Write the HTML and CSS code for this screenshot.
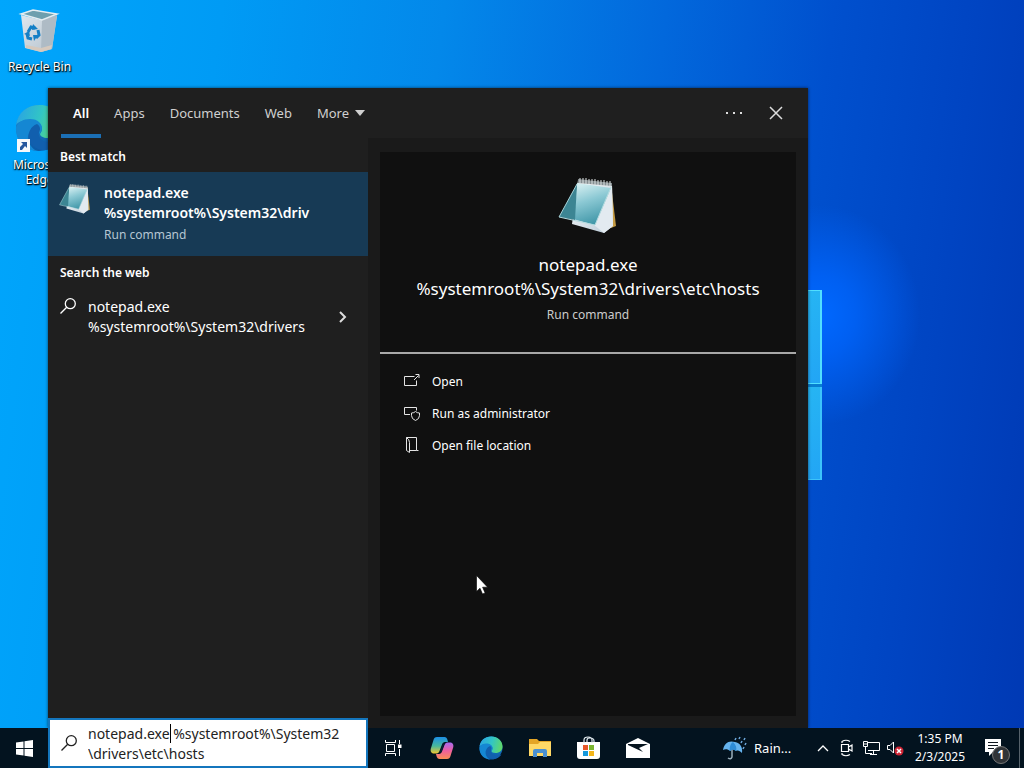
FILE: index.html
```html
<!DOCTYPE html>
<html lang="en">
<head>
<meta charset="utf-8">
<title>Desktop</title>
<link rel="stylesheet" href="styles.css">
</head>
<body>
<svg class="defs" width="0" height="0" aria-hidden="true">
  <defs>
    <linearGradient id="np-sheet" x1=".3" y1="0" x2=".6" y2="1"><stop offset="0" stop-color="#d2edf0"/><stop offset=".4" stop-color="#8cc9d4"/><stop offset="1" stop-color="#3b93a5"/></linearGradient>
    <linearGradient id="np-page" x1="0" y1="0" x2="1" y2="1"><stop offset="0" stop-color="#fff"/><stop offset="1" stop-color="#b8c9d6"/></linearGradient>
    <linearGradient id="edge-top" x1="0" y1=".4" x2="1" y2=".6"><stop offset="0" stop-color="#2aa5e2"/><stop offset=".5" stop-color="#32c5c5"/><stop offset="1" stop-color="#62d966"/></linearGradient>
    <linearGradient id="edge-mid" x1="0" y1="0" x2="0" y2="1"><stop offset="0" stop-color="#1b8edd"/><stop offset="1" stop-color="#0c59a4"/></linearGradient>
    <linearGradient id="cp-left" x1="0" y1="0" x2="0" y2="1"><stop offset="0" stop-color="#1c8fe6"/><stop offset=".55" stop-color="#48b99b"/><stop offset="1" stop-color="#f1c730"/></linearGradient>
    <linearGradient id="cp-right" x1="0" y1="0" x2="0" y2="1"><stop offset="0" stop-color="#a66af0"/><stop offset=".5" stop-color="#ef5f9e"/><stop offset="1" stop-color="#fb8d54"/></linearGradient>
    <linearGradient id="bin" x1="0" y1="0" x2="1" y2="1"><stop offset="0" stop-color="#dfe7ee"/><stop offset="1" stop-color="#b6c2cc"/></linearGradient>
    <symbol id="notepad" viewBox="0 0 60 60">
      <path d="M53 8l5 42-5 2-6-42z" fill="#c49a43"/>
      <path d="M20 4l34 4 1 42-9 7-32-9z" fill="url(#np-page)"/>
      <path d="M54 10l1 40-9 7-10-8z" fill="#e3eaf0"/>
      <path d="M19 7l34 5-16 37-22-6z" fill="url(#np-sheet)"/>
      <path d="M19 8l-2 36-16-3z" fill="#3c8593"/>
      <path d="M1 41l36 8 16-38" fill="none" stroke="#b5dce0"/>
      <path d="M19 8L1 41" stroke="#a7d3d8"/>
      <path d="M20 3l34 4v3L20 7z" fill="#848d90"/>
      <path d="M22 2v5m3-5v6m3-6v6m3-5v5m3-5v6m3-6v6m3-5v5m3-5v6m3-6v6m3-5v5m3-5v6" stroke="#dce1e1"/>
    </symbol>
    <symbol id="edge" viewBox="0 0 48 48">
      <circle cx="24" cy="24" r="23" fill="url(#edge-mid)"/>
      <path d="M1 21C3 8 12 1 25 1c13 0 22 9 22 20 0 8-6 13-14 13-5 0-8-2-8-4 0-1 2-2 2-5 0-5-5-9-12-9C8 16 3 18 1 21z" fill="url(#edge-top)"/>
      <path d="M1 23c2-5 7-8 14-8 8 0 12 5 12 9 0 3-2 4-2 6-5-7-13-4-12 5 1 6 5 10 9 12C9 46 0 36 1 23z" fill="#1587d3"/>
      <path d="M22 20c-13 5-10 24 5 26 7 1 14-3 18-9-9 4-19 1-21-5-1-3 1-5 1-7 0-2-1-4-3-5z" fill="#115fae"/>
    </symbol>
    <symbol id="search" viewBox="0 0 18 18"><g fill="none" stroke="currentColor" stroke-width="1.3"><circle cx="11.3" cy="6.7" r="5"/><path d="M7.700 10.300L1.500 16.500"/></g></symbol>
  </defs>
</svg>

<main class="desktop">
  <div class="window-logo" aria-hidden="true"><i></i><i></i></div>
  <nav class="shortcuts" aria-label="Desktop">
    <button class="shortcut">
      <svg width="48" height="52" viewBox="0 0 48 52">
        <path d="M5 11l4 33 16 4 11-3 5-33-16 4z" fill="url(#bin)"/>
        <path d="M26 16l-1 32 11-3 5-34z" fill="#aebbc5"/>
        <path d="M5 10l12-4 24 4-15 6z" fill="#6d9fae" stroke="#e5edf1" stroke-width="1.500"/>
        <path d="M10 41l15 3 11-3-1 4-10 3-15-4z" fill="#d6c9bd"/>
        <g fill="none" stroke="#147fc6" stroke-width="3"><path d="M12 28l3-5 4 1M22 26l1 5-3 3M16 35l-4-1-1-4"/></g>
        <path d="M17 20l5 5-6 1zm5 11l-4 6-1-6zM8 30l5-3 1 5z" fill="#147fc6"/>
      </svg>
      <span>Recycle Bin</span>
    </button>
    <button class="shortcut">
      <span class="linked"><svg width="48" height="48"><use href="#edge"/></svg>
      <svg class="arrow" width="13" height="13" viewBox="0 0 13 13"><path d="M0 0h13v13H0z" fill="#f6f8fb"/><path d="M3 11V8l3-3-2-2h6v6L8 7l-3 4z" fill="#24569d"/></svg></span>
      <span>Microsoft Edge</span>
    </button>
  </nav>

  <section class="panel" aria-label="Search">
    <header class="panel-head">
      <nav class="tabs">
        <button class="tab tab-on">All</button>
        <button class="tab">Apps</button>
        <button class="tab">Documents</button>
        <button class="tab">Web</button>
        <button class="tab">More <svg width="10" height="6" viewBox="0 0 10 6"><path d="M0 0h10L5 6z" fill="currentColor"/></svg></button>
      </nav>
      <button class="head-btn" aria-label="Options"><svg width="16" height="4" viewBox="0 0 16 4" fill="#ddd"><path d="M0 1h2v2H0zM7 1h2v2H7zM14 1h2v2h-2z"/></svg></button>
      <button class="head-btn" aria-label="Close"><svg width="14" height="14" viewBox="0 0 14 14"><path d="M1 1l12 12M13 1L1 13" stroke="#ddd" stroke-width="1.500"/></svg></button>
    </header>
    <div class="panel-body">
      <div class="results">
        <h2>Best match</h2>
        <button class="best">
          <svg width="32" height="32"><use href="#notepad"/></svg>
          <span class="best-text"><strong>notepad.exe<br>%systemroot%\System32\driv</strong><small>Run command</small></span>
        </button>
        <h2>Search the web</h2>
        <button class="web">
          <svg width="18" height="18"><use href="#search"/></svg>
          <span>notepad.exe<br>%systemroot%\System32\drivers</span>
          <svg class="go" width="8" height="14" viewBox="0 0 8 14"><path d="M1 2l5 5-5 5" fill="none" stroke="#ddd" stroke-width="2"/></svg>
        </button>
      </div>
      <article class="preview">
        <div class="hero">
          <svg width="64" height="60"><use href="#notepad"/></svg>
          <h1>notepad.exe<br>%systemroot%\System32\drivers\etc\hosts</h1>
          <p>Run command</p>
        </div>
        <div class="actions">
          <button class="action"><svg width="16" height="18" viewBox="0 0 16 18"><path d="M10.500 3.500h-10v9h12v-5M10 7l4.500-4.500M11.500 1.500h3.500V5" fill="none" stroke="#e4e4e4"/></svg>Open</button>
          <button class="action"><svg width="16" height="18" viewBox="0 0 16 18"><path d="M6 9.500H.500v-7h12v3M7.500 8q2.500 0 4-1.500 1.500 1.500 4 1.500v2.500q0 3.500-4 5-4-1.500-4-5z" fill="none" stroke="#e4e4e4"/></svg>Run as administrator</button>
          <button class="action"><svg width="16" height="18" viewBox="0 0 16 18"><path d="M2.500 .500h10v13h2M12.500 13.500H6M2.500.500v13l3 2V5.500q0-3-3-5" fill="none" stroke="#e4e4e4"/></svg>Open file location</button>
        </div>
      </article>
    </div>
  </section>
</main>

<footer class="taskbar">
  <button class="start" aria-label="Start"><svg width="17" height="17" viewBox="0 0 17 17" fill="#fff"><path d="M0 2.500L7.500 1.500V8H0zM8.500 1.300L17 0v8H8.500zM0 9h7.500v6.500L0 14.500zM8.500 9H17v8l-8.500-1.300z"/></svg></button>
  <label class="searchbox">
    <svg width="18" height="18"><use href="#search"/></svg>
    <textarea rows="2" aria-label="Type here to search" spellcheck="false">notepad.exe %systemroot%\System32
\drivers\etc\hosts</textarea>
    <i class="caret"></i>
  </label>
  <nav class="apps" aria-label="Taskbar">
    <button aria-label="Task view"><svg width="18" height="18" viewBox="0 0 18 18"><path d="M1.500 1v2.500h10V1M1.500 17v-2.500h10V17M2.500 5.500h8v7h-8zM15.500 1v4M15.500 10v7" fill="none" stroke="#fff"/><path d="M14 5.500h3.500V9H14z" fill="#fff"/></svg></button>
    <button aria-label="Copilot"><svg width="24" height="24" viewBox="0 0 24 24"><path d="M7 1h7.500c1.500 0 2.500 1 3 3l.5 2h-3c-1.500 0-2.500 1-3 2.500L9.500 15c-.5 1.500-1.500 2.500-3 2.500H4c-3 0-4-2.500-3-5.500L3.500 4C4 2 5 1 7 1z" fill="url(#cp-left)"/><path d="M17 23H9.500C8 23 7 22 6.500 20L6 18h3c1.500 0 2.500-1 3-2.500L14.500 9c.5-1.500 1.500-2.500 3-2.500H20c3 0 4 2.500 3 5.500L20.500 20c-.5 2-1.500 3-3.500 3z" fill="url(#cp-right)"/><path d="M13 7.500h1.500L11.500 16H9.800z" fill="#062236"/></svg></button>
    <button aria-label="Edge"><svg width="24" height="24"><use href="#edge"/></svg></button>
    <button aria-label="File Explorer"><svg width="22" height="20" viewBox="0 0 22 20"><path d="M0 1h8l2 2h12v5H0z" fill="#e4a526"/><path d="M0 6h9l2-2h11v14H0z" fill="#ffd866"/><path d="M4 19v-6q0-2 2-2h10q2 0 2 2v6h-4v-4H8v4z" fill="#4a8fd0"/></svg></button>
    <button aria-label="Store"><svg width="24" height="24" viewBox="0 0 24 24"><path d="M0 6h23v14q0 3-3 3H3q-3 0-3-3z" fill="#fff"/><path d="M7 7V4q0-3 4-3t4 3v3M10 6V4q0-2 3-2 4 0 4 3v1" fill="none" stroke="#e4edf2" stroke-width="1.200"/><path d="M6 9h5v5H6z" fill="#e8572a"/><path d="M12 9h5v5h-5z" fill="#7bb52f"/><path d="M6 15h5v5H6z" fill="#1799dc"/><path d="M12 15h5v5h-5z" fill="#f4b61b"/></svg></button>
    <button aria-label="Mail"><svg width="24" height="20" viewBox="0 0 24 20"><path d="M0 6l12-6 12 6v14H0z" fill="#fff"/><path d="M2 6h20l-9 4 4 4L2 7z" fill="#06141e"/></svg></button>
  </nav>
  <div class="tray">
    <button class="weather"><svg width="24" height="24" viewBox="0 0 24 24"><path d="M0 14C1 7 6 4 12 6c5 1 8 5 7 11-2-2-4-3-6-2-2-2-4-2-6 0-2-2-5-2-7-1z" fill="#65b3ee"/><path d="M7 15C6 11 8 7 10 6c3 3 4 6 3 9-2-2-4-2-6 0z" fill="#2e8cd6"/><path d="M9 14v7q-1 3-4 1" fill="none" stroke="#9aaebb" stroke-width="1.500"/><path d="M13 2l-1 2M17 1l-1 2M22 2l-1 2M19 5l-1 2M23 7l-1 2M21 11l-1 2" stroke="#6ea9dc" stroke-width="1.500"/></svg>Rain...</button>
    <button aria-label="Show hidden icons"><svg width="12" height="8" viewBox="0 0 12 8"><path d="M1 7l5-5 5 5" fill="none" stroke="#fff" stroke-width="1.300"/></svg></button>
    <button aria-label="Meet now"><svg width="14" height="18" viewBox="0 0 14 18"><path d="M1.500 5.500h7v7h-7zM8.500 8L12 6v6l-3.500-2M2 4V2.500Q6 0 10 2.500M2 14v1.500q4 2.500 8 0" fill="none" stroke="#fff" stroke-width="1.200"/></svg></button>
    <button aria-label="Network"><svg width="17" height="16" viewBox="0 0 17 16"><path d="M5 2.500h11.500v8H5M2.500 7v6.500H9M10.500 11v3M7 14.500h7M.500 1.500h4v5h-4zM1 4h3" fill="none" stroke="#fff"/></svg></button>
    <button aria-label="Volume muted"><svg width="17" height="16" viewBox="0 0 17 16"><path d="M.500 5.500H3L6.500 2v11L3 9.500H.500z" fill="none" stroke="#fff"/><circle cx="12" cy="11" r="4.500" fill="#cf2434"/><path d="M10 9l4 4M14 9l-4 4" stroke="#fff" stroke-width="1.500"/></svg></button>
    <button class="clock">1:35 PM<br>2/3/2025</button>
    <button class="notify" aria-label="1 new notification"><svg width="18" height="18" viewBox="0 0 18 18"><path d="M0 0h16v13H8l-4 4v-4H0z" fill="#fff"/><path d="M3 3.500h10M3 6.500h10M3 9.500h6" stroke="#101820"/></svg><b>1</b></button>
    <button class="peek" aria-label="Show desktop"></button>
  </div>
</footer>
<svg class="pointer" width="12" height="20" viewBox="0 0 12 20" aria-hidden="true"><path d="M.500.500v16l3.500-3.300 2.500 5.800 2.600-1.100-2.500-5.700h5z" fill="#fff" stroke="#000" stroke-width=".6"/></svg>
</body>
</html>
```

FILE: styles.css
```css
* { box-sizing: border-box; }
body {
  margin: 0;
  min-height: 100vh;
  display: grid;
  grid-template-rows: 1fr 40px;
  font: 13px/20px "Noto Sans", "Open Sans", sans-serif;
  color: #fff;
}
button {
  margin: 0; padding: 0; border: 0;
  background: none; color: inherit; font: inherit; text-align: left;
}
svg { flex: none; display: block; }
.defs { position: absolute; }

.desktop {
  position: relative;
  overflow: hidden;
  background:
    radial-gradient(ellipse 100px 110px at 820px 315px, #0068ff 0%, #0066ffc0 35%, #0060f000 100%),
    linear-gradient(97deg, #00a6fc 0%, #009bf5 20%, #0388ea 40%, #0268dc 60%, #0050ce 75%, #0044c2 88%, #0039b4 100%);
}
.window-logo {
  position: absolute;
  left: 720px; top: 290px;
  width: 102px; height: 190px;
  display: grid;
  grid-template-rows: 1fr 1fr;
  gap: 3px;
  background: #087ed0;
}
.window-logo i { background: linear-gradient(150deg, #28bdf2, #22a5f5); border: solid #50dfff; border-width: 1px 2px 1px 0; }
.window-logo i + i { border-color: #3cc4fb; border-top-width: 0; }

.shortcuts { display: flex; flex-direction: column; gap: 20px; padding: 4px 0 0 1px; width: 78px; }
.shortcut {
  display: flex; flex-direction: column; align-items: center; gap: 3px;
  font-size: 12px; line-height: 15px; text-align: center;
  text-shadow: 0 1px 2px #000, 1px 1px 1px #000;
}
.linked { position: relative; padding: 10px 0 2px; }
.linked svg:first-child { margin-left: -2px; }
.arrow { position: absolute; left: 0; bottom: 2px; }

.panel {
  position: absolute; inset: 88px auto 0 48px;
  width: 760px;
  display: flex; flex-direction: column;
  background: #1f1f1f;
  box-shadow: 0 0 3px #0009;
}
.panel-head { display: flex; align-items: center; height: 50px; padding: 0 11px 0 13px; }
.tabs { display: flex; gap: 1px; height: 100%; margin-right: auto; }
.tab { display: flex; align-items: center; gap: 6px; padding: 4px 12px 0; color: #d0d0d0; border: solid transparent; border-width: 0 0 4px; }
.tab-on { color: #fff; font-weight: 600; border-color: #1b6fb5; }
.head-btn { width: 42px; height: 40px; display: grid; place-items: center; }
.panel-body {
  flex: 1; display: flex; padding-top: 2px;
  background: linear-gradient(#1a1a1a, #1a1a1a) right / 440px 100% no-repeat;
}
.results { width: 320px; }
.results h2 { margin: 0; padding: 7px 12px 5px; font-size: 12px; font-weight: 600; line-height: 20px; }
.best { width: 100%; display: flex; gap: 13px; padding: 11px; background: #173a55; }
.best-text { display: flex; flex-direction: column; gap: 2px; }
.best strong { font-size: 14px; font-weight: 600; }
.best small { font-size: 12px; color: #b5c6d3; }
.web { width: 100%; display: flex; align-items: flex-start; gap: 11px; padding: 9px 21px 8px 11px; font-size: 14px; }
.go { margin-left: auto; align-self: center; }

.preview { flex: 1; margin: 12px; background: #101010; }
.hero { display: flex; flex-direction: column; align-items: center; padding: 24px 12px 27px; border-bottom: 2px solid #a8a8a8; }
.hero h1 { margin: 17px 0 4px; font-size: 17px; font-weight: 400; line-height: 24px; text-align: center; }
.hero p { margin: 0; font-size: 12px; color: #ccc; }
.actions { display: flex; flex-direction: column; padding: 12px 24px; }
.action { display: flex; align-items: center; gap: 12px; height: 32px; font-size: 12px; }

.taskbar { position: relative; display: flex; align-items: center; background: #03131f; }
.start { width: 48px; height: 40px; display: grid; place-items: center; }
.searchbox {
  position: relative; align-self: flex-end;
  width: 320px; height: 50px;
  display: flex; align-items: center; gap: 10px; padding-left: 10px;
  border: 2px solid #1476bd; background: #fff; color: #222;
}
.searchbox textarea {
  flex: 1; height: 42px; padding: 2px 0 0; border: 0; outline: 0; resize: none; overflow: hidden;
  background: none; color: #222; font: inherit; font-size: 14px; line-height: 20px; white-space: pre;
}
.caret { position: absolute; left: 120px; top: 4px; width: 1px; height: 19px; background: #000; }
.apps { display: flex; }
.apps button { width: 49px; height: 40px; display: grid; place-items: center; }
.tray { display: flex; align-items: center; height: 100%; margin-left: auto; }
.tray button { display: grid; place-items: center; width: 24px; height: 40px; }
.tray .weather { display: flex; gap: 7px; width: 88px; }
.tray .clock { width: 66px; font-size: 12px; line-height: 18px; text-align: center; white-space: nowrap; }
.tray .notify { position: relative; width: 46px; padding-right: 4px; }
.notify b {
  position: absolute; right: 9px; bottom: 4px; width: 18px; height: 18px;
  border: 1px solid #777; border-radius: 50%; background: #303438;
  font-size: 12px; line-height: 16px; text-align: center;
}
.tray .peek { width: 5px; border-left: 1px solid #56626b; }
.pointer { position: absolute; left: 476px; top: 575px; }
```
